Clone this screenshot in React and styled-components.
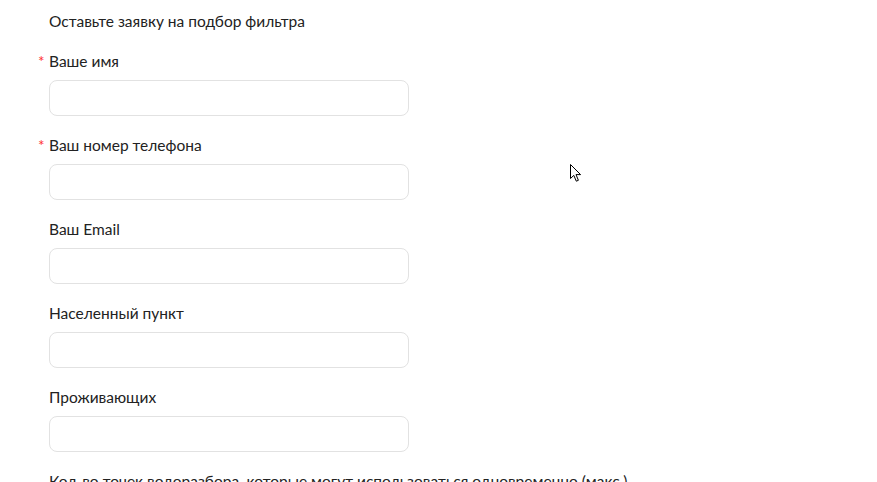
import styled, { createGlobalStyle } from "styled-components";

const GlobalStyle = createGlobalStyle`
  html, body {
    margin: 0;
    padding: 0;
    background: #fff;
    overflow: hidden;
  }
  body {
    font-family: Lato, "Open Sans", sans-serif;
    color: #222;
  }
`;

const Page = styled.div`
  position: relative;
  width: 877px;
  height: 482px;
  overflow: hidden;
`;

const Form = styled.form`
  display: flex;
  flex-direction: column;
  padding: 11px 0 0 49px;
`;

const Title = styled.div`
  font-size: 15.5px;
  line-height: 20px;
  margin-bottom: 20px;
`;

const Field = styled.div`
  display: flex;
  flex-direction: column;
  margin-bottom: 19px;
`;

const Label = styled.label`
  font-size: 15.5px;
  line-height: 20px;
  margin-bottom: 9px;
  white-space: nowrap;
`;

const Required = styled.span`
  display: inline-block;
  width: 11px;
  margin-left: -11px;
  color: #f33;
`;

const Input = styled.input`
  box-sizing: border-box;
  width: 360px;
  height: 36px;
  border: 1px solid #e2e2e2;
  border-radius: 8px;
  background: #fff;
  font: inherit;
  padding: 0 12px;
  outline: none;
`;

const Cursor = styled.svg`
  position: absolute;
  left: 570px;
  top: 164px;
`;

const fields = [
  { label: "Ваше имя", required: true },
  { label: "Ваш номер телефона", required: true },
  { label: "Ваш Email" },
  { label: "Населенный пункт" },
  { label: "Проживающих" },
  { label: "Кол-во точек водоразбора, которые могут использоваться одновременно (макс.)" },
];

const App = () => {
  return (
    <Page>
      <GlobalStyle />
      <Form>
        <Title>Оставьте заявку на подбор фильтра</Title>
        {fields.map((f) => (
          <Field key={f.label}>
            <Label>
              {f.required && <Required>*</Required>}
              {f.label}
            </Label>
            <Input />
          </Field>
        ))}
      </Form>
      <Cursor width="14" height="20" viewBox="0 0 14 20">
        <path
          d="M0.5 0.5 L0.5 14.5 L3.8 11.4 L6.3 17.2 L8.4 16.3 L6 10.6 L10.6 10.6 Z"
          fill="#fff"
          stroke="#000"
          strokeWidth="1"
          strokeLinejoin="miter"
        />
      </Cursor>
    </Page>
  );
};

export default App;
